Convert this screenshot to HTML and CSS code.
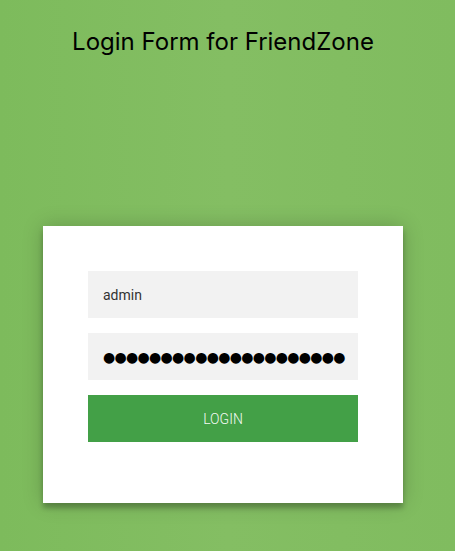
FILE: index.html
```html
<!DOCTYPE html>
<html>
<head>
<meta charset="utf-8">
<link rel="stylesheet" href="styles.css">
</head>
<body>
<div class="page">
  <h1 class="title">Login Form for FriendZone</h1>
  <div class="login-page">
    <form class="form">
      <input class="field" type="text" value="admin">
      <input class="field field-pass" type="text" value="●●●●●●●●●●●●●●●●●●●●●">
      <button class="btn" type="button">login</button>
    </form>
  </div>
</div>
</body>
</html>
```
FILE: styles.css
```css
html, body {
  margin: 0;
  padding: 0;
  height: 100%;
}
body {
  background: linear-gradient(to right, #7dbb5c, #84be63 50%, #80bc5f);
  font-family: Roboto, "Noto Sans", sans-serif;
}
.page {
  width: 446px;
  padding-top: 27px;
}
.title {
  margin: 0;
  text-align: center;
  font-family: Inter, "Noto Sans", sans-serif;
  font-size: 24px;
  font-weight: 400;
  color: #000;
  line-height: 29px;
}
.login-page {
  padding-top: 170px;
}
.form {
  width: 360px;
  box-sizing: border-box;
  margin: 0 auto;
  background: #fff;
  padding: 45px 45px 61px;
  box-shadow: 0 0 20px 0 rgba(0,0,0,0.2), 0 5px 5px 0 rgba(0,0,0,0.24);
  display: flex;
  flex-direction: column;
  gap: 15px;
}
.field {
  font-family: Roboto, sans-serif;
  outline: 0;
  background: #f2f2f2;
  width: 100%;
  border: 0;
  margin: 0;
  padding: 0 15px;
  box-sizing: border-box;
  height: 47px;
  font-size: 14px;
  color: #333;
}
.field-pass {
  font-family: "DejaVu Sans", sans-serif;
  letter-spacing: -0.7px;
  padding-right: 4px;
  color: #000;
}
.btn {
  font-family: Roboto, sans-serif;
  text-transform: uppercase;
  background: #43a047;
  width: 100%;
  border: 0;
  height: 47px;
  padding: 0;
  color: #f4faf4;
  font-size: 14px;
  font-weight: 300;
}
```
